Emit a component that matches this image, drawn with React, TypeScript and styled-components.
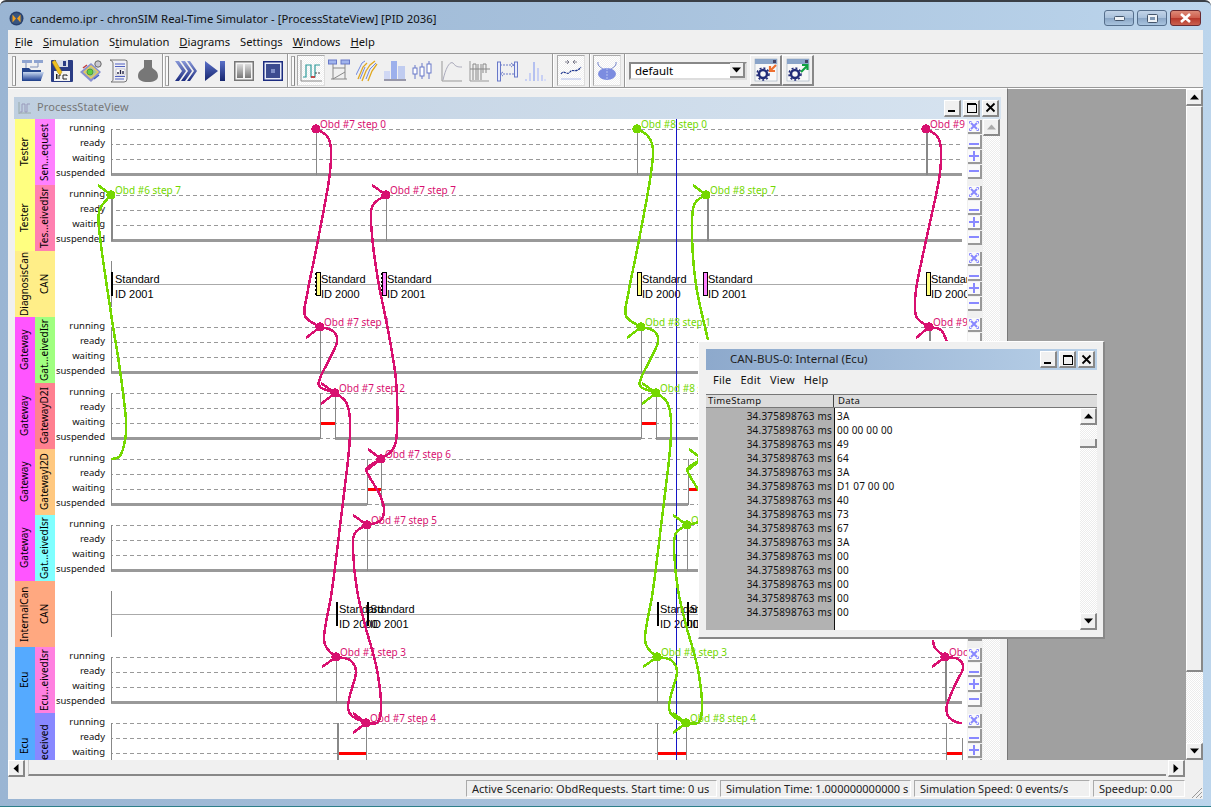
import React from 'react';
import styled, { createGlobalStyle } from 'styled-components';

const MAGENTA = '#d81070';
const GREEN = '#74d800';
const ui = `"Noto Sans", "Open Sans", sans-serif`;

const Global = createGlobalStyle`
  html, body { margin: 0; padding: 0; background: #fff; overflow: hidden; }
  #root { width: 1211px; height: 807px; }
`;

const Win = styled.div`
  position: relative; width: 1211px; height: 807px; box-sizing: border-box; overflow: hidden;
  display: flex; flex-direction: column;
  background: linear-gradient(90deg, #9ab5d3 0%, #a7c1dc 50%, #bcd5ec 100%);
  border-top: 2px solid #3a3f46; border-bottom: 1px solid #2e7f8a; border-radius: 6px 6px 0 0;
`;
const TitleBar = styled.div`
  height: 28px; flex: none; box-sizing: border-box; display: flex; align-items: center; padding: 4px 10px 0 9px;
  font: 11.3px ${ui}; color: #111;
`;
const TitleText = styled.span` margin-left: 6px; flex: 1; letter-spacing: 0.03px; `;
const Caption = styled.div<{ $red?: boolean; $w: number }>`
  width: ${p => p.$w}px; height: 16px; margin-left: 3px; border-radius: 3px; box-sizing: border-box;
  border: 1px solid ${p => (p.$red ? '#6a2a30' : '#566f8c')};
  background: ${p => p.$red ? 'linear-gradient(#dd8a78 0%, #cf5f4e 48%, #b7382b 52%, #c9604f 100%)' : 'linear-gradient(#c2d4e8 0%, #a9c1db 48%, #8aa6c6 52%, #a9c4de 100%)'};
  display: flex; align-items: center; justify-content: center;
`;
const Client = styled.div`
  flex: 1; min-height: 0; margin: 0 8px 7px 8px; background: #f0f0f0; display: flex; flex-direction: column;
`;
const MenuBar = styled.div`
  height: 24px; flex: none; display: flex; align-items: center; gap: 10px; padding-left: 7px; box-sizing: border-box;
  font: 11.2px ${ui}; color: #111; border-bottom: 1px solid #999;
`;
const MenuItem = styled.span` u { text-underline-offset: 1px; } `;
const ToolBar = styled.div`
  height: 34px; flex: none; display: flex; align-items: center; box-sizing: border-box;
  padding-left: 4px; border-bottom: 1px solid #999;
`;
const Grip = styled.div`
  width: 2px; height: 28px; border: 1px solid #aaa; border-right-color: #888; background: #fafafa; margin: 0 2px 0 0; flex: none;
`;
const Divider = styled.div<{ $l?: number; $r?: number }>`
  width: 1px; height: 33px; background: #999; border-right: 1px solid #fff; flex: none;
  margin: 0 ${p => p.$r ?? 1}px 0 ${p => p.$l ?? 0}px;
`;
const Slot = styled.div<{ $w: number; $on?: boolean }>`
  width: ${p => p.$w}px; height: 31px; flex: none; display: flex; align-items: center; justify-content: center; box-sizing: border-box;
  ${p => p.$on ? `border: 1px solid #ddd; border-top-color:#aaa; border-left-color:#aaa; background: repeating-conic-gradient(#f0f0f0 0 25%, #fff 0 50%) 0 0/2px 2px;` : ''}
`;
const Combo = styled.div`
  width: 118px; height: 18px; margin-left: 2px; flex: none; box-sizing: border-box; background: #fff;
  border: 2px solid #888; border-right-color: #ddd; border-bottom-color: #ddd; display: flex; align-items: center;
  font: 11.5px ${ui}; color: #000; padding-left: 4px; justify-content: space-between;
`;
const ComboArrow = styled.div`
  width: 15px; height: 15px; background: #f0f0f0; border-right: 2px solid #888; border-bottom: 2px solid #888; box-sizing: border-box;
  display: flex; align-items: center; justify-content: center;
`;
const BigBtn = styled.div<{ $first?: boolean }>`
  width: 32px; height: 31px; flex: none; box-sizing: border-box; background: #f0f0f0; margin-left: ${p => (p.$first ? 3 : 0)}px;
  border: 1px solid #fff; border-right: 2px solid #888; border-bottom: 2px solid #888;
  display: flex; align-items: center; justify-content: center;
`;
const MdiRow = styled.div` flex: 1; min-height: 0; display: flex; `;
const Inner = styled.div`
  width: 1000px; flex: none; display: flex; flex-direction: column; box-sizing: border-box; border-right: 1px solid #777;
  border-top: 1px solid #fff; padding: 8px 0 0 6px; overflow: hidden;
`;
const InnerTitle = styled.div`
  height: 22px; width: 987px; flex: none; box-sizing: border-box; display: flex; align-items: center; padding-left: 4px;
  background: linear-gradient(90deg, #bfcfe0, #d6e3f0); font: 11px ${ui}; color: #777;
`;
const InnerTitleText = styled.span` margin: 0 0 3px 5px; flex: 1; letter-spacing: 0.1px; `;
const WinBtn = styled.div`
  width: 17px; height: 17px; margin-right: 2px; flex: none; box-sizing: border-box; background: #f0f0f0;
  border: 1px solid #fff; border-right: 2px solid #888; border-bottom: 2px solid #888;
  display: flex; align-items: center; justify-content: center;
`;
const Body = styled.div` position: relative; flex: 1; min-height: 0; display: flex; overflow: hidden; margin-left: 1px; `;
const Tracks = styled.div` width: 968px; flex: none; `;
const Row = styled.div` height: 66px; display: flex; background: #fff; `;
const VLabel = styled.div<{ $bg: string }>`
  width: 20px; height: 66px; flex: none; box-sizing: border-box; padding-left: 2px; background: ${p => p.$bg}; writing-mode: vertical-rl; transform: rotate(180deg);
  display: flex; align-items: center; justify-content: center; font: 10px/20px ${ui}; color: #000; white-space: nowrap;
`;
const States = styled.div`
  width: 56px; flex: none; box-sizing: border-box; padding: 1px 6px 0 0; text-align: right;
  font: 9.5px/15px ${ui}; color: #111;
`;
const Ctrl = styled.div` width: 16px; flex: none; padding-top: 1px; display: flex; flex-direction: column; background: #f0f0f0; `;
const CtrlBtn = styled.div`
  width: 14px; height: 14px; margin: 0 1px 1px 1px; box-sizing: border-box; background: #fafafa;
  border-right: 2px solid #999; border-bottom: 2px solid #999; display: flex; align-items: center; justify-content: center;
`;
const Dither = styled.div<{ $w: number }>`
  width: ${p => p.$w}px; flex: none; display: flex; flex-direction: column; justify-content: space-between;
  background: repeating-conic-gradient(#ececec 0 25%, #fff 0 50%) 0 0/2px 2px;
`;
const ScrollBtn = styled.div<{ $dim?: boolean }>`
  width: 17px; height: 17px; flex: none; box-sizing: border-box; background: #f0f0f0; border: 1px solid #fff;
  border-right: 2px solid #888; border-bottom: 2px solid #888; color: ${p => (p.$dim ? '#aaa' : '#000')};
  display: flex; align-items: center; justify-content: center;
`;
const Overlay = styled.svg` position: absolute; left: 0; top: 0; pointer-events: none; overflow: hidden; `;
const Gray = styled.div` flex: 1; background: #a0a0a0; border-top: 1px solid #fff; `;
const VScroll = styled(Dither)` height: 100%; box-sizing: border-box; border-top: 1px solid #fff; `;
const VThumb = styled.div`
  height: 566px; flex: none; box-sizing: border-box; background: #f0f0f0; border: 1px solid #fff; border-right: 2px solid #888; border-bottom: 2px solid #888;
`;
const VSpacer = styled.div` flex: 1; `;
const HScroll = styled.div` height: 16px; flex: none; display: flex; background: #f0f0f0; `;
const HThumb = styled.div` flex: 1; margin: 0 2px 0 3px; border-bottom: 2px solid #888; border-left: 1px solid #ccc; `;
const HCorner = styled.div` width: 18px; flex: none; `;
const Status = styled.div`
  height: 23px; flex: none; box-sizing: border-box; display: flex; justify-content: flex-end; align-items: flex-start; padding: 4px 18px 0 0; gap: 3px;
  font: 11px ${ui}; color: #222; position: relative;
`;
const Cell = styled.div<{ $w: number }>`
  width: ${p => p.$w}px; height: 17px; box-sizing: border-box; border: 1px solid #aaa; border-right-color: #fff; border-bottom-color: #fff;
  padding-left: 5px; line-height: 15px; white-space: nowrap; overflow: hidden;
`;
const Corner = styled.svg` position: absolute; right: 0; bottom: 0; `;
const Float = styled.div`
  position: absolute; left: 698px; top: 339px; width: 407px; height: 298px; box-sizing: border-box; background: #f0f0f0;
  border: 1px solid #fff; border-right: 2px solid #888; border-bottom: 2px solid #888; padding: 7px 6px 0 7px; display: flex; flex-direction: column;
`;
const FloatTitle = styled.div`
  height: 21px; flex: none; display: flex; align-items: center; padding-left: 24px; font: 11.5px ${ui}; color: #222;
  background: linear-gradient(90deg, #8da9cc, #b8d0e8);
`;
const FloatTitleText = styled.span` flex: 1; margin-bottom: 3px; `;
const FloatMenu = styled.div` height: 24px; flex: none; display: flex; align-items: center; gap: 9px; padding: 0 0 5px 7px; box-sizing: border-box; font: 11px ${ui}; color: #111; letter-spacing: 0.2px; `;
const Head = styled.div`
  height: 12px; flex: none; display: flex; background: #dcdcdc; border-top: 1px solid #777; border-bottom: 1px solid #777; font: 9.5px/11px ${ui}; letter-spacing: 0.3px; color: #111;
`;
const HeadA = styled.div` width: 128px; padding-left: 2px; box-sizing: border-box; border-right: 1px solid #444; `;
const HeadB = styled.div` padding-left: 4px; `;
const TableWrap = styled.div` flex: 1; min-height: 0; display: flex; `;
const TimeCol = styled.div`
  width: 129px; flex: none; background: #b2b2b2; border-right: 1px solid #111; box-sizing: border-box; text-align: right; padding: 1px 2px 0 0;
  font: 10px/14px ${ui}; letter-spacing: 0.2px; color: #111; margin-bottom: 7px;
`;
const DataCol = styled.div` flex: 1; background: #fff; padding: 1px 0 0 2px; font: 10px/14px ${ui}; letter-spacing: 0.2px; color: #111; margin-bottom: 7px; `;
const MiniThumb = styled.div` height: 9px; margin-top: 14px; box-sizing: border-box; background: #f0f0f0; border-right: 2px solid #888; border-bottom: 2px solid #888; `;
const TableScroll = styled(Dither)` margin-bottom: 7px; `;

const Up = ({ c = '#000' }: { c?: string }) => <svg width="9" height="6"><path d="M0 5.5 L4.5 0.5 L9 5.5Z" fill={c} /></svg>;
const Down = () => <svg width="9" height="6"><path d="M0 .5 L4.5 5.5 L9 .5Z" fill="#000" /></svg>;

const Glyph = ({ k }: { k: string }) => (
  <svg width="13" height="13" viewBox="0 0 13 13" shapeRendering="crispEdges">
    {k === 'min' && <rect x="2" y="9" width="7" height="2" fill="#000" />}
    {k === 'max' && <path d="M2 2.5H11M2 3.5H11V11H2Z" fill="none" stroke="#000" />}
    {k === 'x' && <path d="M2.5 2.5L10.5 10.5M10.5 2.5L2.5 10.5" stroke="#000" strokeWidth="1.8" shapeRendering="auto" />}
  </svg>
);

const CtrlIcon = ({ k }: { k: string }) => (
  <svg width="10" height="10" viewBox="0 0 10 10" shapeRendering="crispEdges">
    {k === 'x' && <g fill="none" stroke="#8888ff" shapeRendering="auto"><path d="M2 2L8 8M8 2L2 8" strokeWidth="2" /><path d="M.5 2.5V.5H2.5M7.5 .5H9.5V2.5M.5 7.5V9.5H2.5M7.5 9.5H9.5V7.5" strokeWidth="1" /></g>}
    {k === 'u' && <rect x="0" y="7" width="10" height="2" fill="#8888ff" />}
    {k === 'p' && <path d="M0 4h4V0h2v4h4v2H6v4H4V6H0z" fill="#8888ff" />}
    {k === 'm' && <rect x="0" y="4" width="10" height="2" fill="#8888ff" />}
  </svg>
);

const Ic = ({ w = 24, h = 24, children }: { w?: number; h?: number; children: React.ReactNode }) => (
  <svg width={w} height={h} viewBox={`0 0 ${w} ${h}`}>{children}</svg>
);

const ToolIcons: Record<string, React.ReactNode> = {
  folder: <Ic><defs><linearGradient id="fb" x1="0" y1="0" x2="0" y2="1"><stop offset="0" stopColor="#c8d8f0" /><stop offset="1" stopColor="#2c4c9c" /></linearGradient></defs>
    <rect x="1" y="1" width="10" height="3" fill="#8fa4d0" /><rect x="13" y="1" width="9" height="3" fill="#8fa4d0" />
    <path d="M5 4V9M17 4V8H9" stroke="#7f8fb8" fill="none" />
    <path d="M1 9H8L10 11H20V22H1Z" fill="#24448c" /><path d="M2 13H23L20 21H2Z" fill="url(#fb)" /></Ic>,
  floppy: <Ic><rect x="1" y="1" width="22" height="22" rx="1" fill="#2a3c84" /><rect x="6" y="1" width="12" height="7" fill="#d8dce8" /><rect x="13" y="2" width="3" height="5" fill="#2a3c84" /><rect x="4" y="12" width="16" height="10" fill="#f4f4f4" />
    <rect x="6" y="15" width="1.5" height="5" fill="#222" /><path d="M9 20V16H11M13 16H17V17M13 16V20H17" stroke="#222" fill="none" />
    <path d="M2 3L5 1L12 13L10 16L8 14Z" fill="#f0c020" stroke="#a08010" strokeWidth=".5" /></Ic>,
  gear: <Ic><path d="M1 13L12 4L22 13L12 23Z" fill="#8890d0" /><path d="M4 13L12 6L20 13L12 20Z" fill="#e8c860" /><path d="M6 13L12 8L18 13L12 18Z" fill="#a0c8a0" /><circle cx="11" cy="13" r="3" fill="#60d040" stroke="#407030" strokeWidth=".6" />
    <circle cx="19" cy="5" r="3.2" fill="#c8c8d0" stroke="#666" /><path d="M4 9L8 6" stroke="#c04040" strokeWidth="1.5" /><path d="M15 20L20 16" stroke="#4060c0" strokeWidth="1.5" /></Ic>,
  scroll: <Ic w={20}><path d="M1 1H16Q19 1 18 4V20Q18 23 15 23H2Q5 22 4 19V4Q4 2 1 1Z" fill="#f0f0f4" stroke="#777" /><path d="M6 5H16M6 7.5H16M6 17.5H16M6 20H15" stroke="#5060c0" /><rect x="7" y="10" width="9" height="6" fill="#fff" stroke="#99a" strokeWidth=".5" /><path d="M9 15v-2M11.5 15v-4M14 15v-3" stroke="#224" strokeWidth="1.4" /></Ic>,
  pot: <Ic><path d="M8 1H16V8C16 10 22 11 22 17C22 21 18 23 12 23C6 23 2 21 2 17C2 11 8 10 8 8Z" fill="#777" /></Ic>,
  ff: <Ic w={22}><defs><linearGradient id="ffg" x1="0" y1="0" x2="0" y2="1"><stop offset="0" stopColor="#8898d8" /><stop offset="1" stopColor="#1c2c80" /></linearGradient></defs><path d="M0 2L7 12L0 22H4L11 12L4 2ZM6 2L13 12L6 22H10L17 12L10 2ZM12 2L19 12L12 22H15L22 12L15 2Z" fill="url(#ffg)" /></Ic>,
  step: <Ic w={20}><defs><linearGradient id="sg" x1="0" y1="0" x2="0" y2="1"><stop offset="0" stopColor="#5a70c8" /><stop offset="1" stopColor="#16266e" /></linearGradient></defs><path d="M0 2L13 12L0 22Z" fill="url(#sg)" /><rect x="15" y="2" width="5" height="20" fill="url(#sg)" /></Ic>,
  pause: <Ic w={20}><rect x=".75" y="2.75" width="18.5" height="18.5" fill="#f4f4f4" stroke="#777" strokeWidth="1.5" /><defs><linearGradient id="pg" x1="0" y1="0" x2="0" y2="1"><stop offset="0" stopColor="#ddd" /><stop offset="1" stopColor="#777" /></linearGradient></defs><rect x="3" y="5" width="6" height="14" fill="url(#pg)" /><rect x="11" y="5" width="6" height="14" fill="url(#pg)" /></Ic>,
  stop: <Ic w={20}><rect x=".75" y="2.75" width="18.5" height="18.5" fill="#e8ecf8" stroke="#1c2c80" strokeWidth="1.5" /><rect x="3" y="5" width="14" height="14" fill="#3c4c90" /><rect x="8" y="10" width="4" height="4" fill="#8090c8" /></Ic>,
  c1: <Ic w={22}><path d="M1 1V22H22" fill="none" stroke="#888" /><path d="M3 18H6V6H11V18H15V6H20" fill="none" stroke="#2c9a9a" strokeWidth="1.2" /><path d="M11 18H15" stroke="#d02020" strokeWidth="1.5" /><path d="M15 14H21" stroke="#444" strokeDasharray="2 1" /></Ic>,
  c2: <Ic w={22}><rect x="0.5" y="1" width="8" height="4" fill="#a0b4ec" stroke="#6878c8" /><rect x="13" y="1" width="8.5" height="4" fill="#a0b4ec" stroke="#6878c8" /><path d="M5 5V20M17 5V20M5 9H17M5 20L17 13M3 20H19" stroke="#888" fill="none" /></Ic>,
  c3: <Ic w={22}><path d="M2 20L7 8L11 4M6 22L10 12L14 6L19 2M12 22L16 12L21 5" fill="none" stroke="#e0a820" strokeWidth="1.3" /><path d="M0 16L6 4L9 2M4 20L9 8M10 20L14 10L20 4" fill="none" stroke="#7088e0" strokeWidth="1" /></Ic>,
  c4: <Ic w={22}><rect x="0" y="12" width="6" height="8" fill="#d0d8f4" /><rect x="7" y="2" width="6" height="18" fill="#9cb0ec" /><rect x="14" y="7" width="7" height="13" fill="#c0ccf0" /><rect x="0" y="20" width="22" height="2" fill="#99a" /></Ic>,
  c5: <Ic w={22}><g fill="none" stroke="#6878c8"><path d="M3 6V20M10 4V20M17 2V20" /><rect x="1" y="9" width="4" height="6" fill="#fff" /><rect x="8" y="8" width="4" height="9" fill="#fff" /><rect x="15" y="5" width="4" height="9" fill="#fff" /></g></Ic>,
  c6: <Ic w={21}><path d="M1 2V22H21" stroke="#999" fill="none" /><path d="M2 21C5 8 9 2 12 4C15 8 17 8 21 8" stroke="#aab" fill="none" /></Ic>,
  c7: <Ic w={21}><path d="M1 2V22H20" stroke="#999" fill="none" /><path d="M4 21V5H7V21M9 5V21M12 5V21M14 5V14M14 5H17V14M1 10H21" stroke="#888" fill="none" /></Ic>,
  c8: <Ic w={21}><rect x=".5" y="3" width="3" height="19" fill="#e8ecfc" stroke="#6878c8" /><rect x="17.5" y="3" width="3" height="15" fill="#e8ecfc" stroke="#6878c8" /><path d="M3 6H17M14 4L17 6L14 8M3 15H17M6 13L3 15L6 17" stroke="#6878c8" fill="none" strokeDasharray="2 1" /></Ic>,
  c9: <Ic w={22}><rect x="1" y="20" width="2" height="2" fill="#c8d0f4" /><rect x="5" y="14" width="2" height="8" fill="#c8d0f4" /><rect x="9" y="3" width="2" height="19" fill="#b4c0f0" /><rect x="13" y="9" width="2" height="13" fill="#c8d0f4" /><rect x="17" y="16" width="2" height="6" fill="#c8d0f4" /><rect x="20" y="20" width="2" height="2" fill="#d8def8" /></Ic>,
  trace: <Ic w={22}><path d="M5 3H9M7 1L9 3L7 5M17 3H13M15 1L13 3L15 5" stroke="#667" fill="none" strokeWidth=".8" /><path d="M1 15C4 10 7 17 10 13C13 9 16 15 21 8" stroke="#223a90" fill="none" strokeWidth="1.2" strokeDasharray="2.5 .7" /><path d="M1 20H21" stroke="#b0bce8" /></Ic>,
  eye: <Ic w={24}><path d="M3 3C2 8 8 9 9 11M21 3C22 8 16 9 15 11" fill="none" stroke="#7080c8" /><ellipse cx="12" cy="15" rx="9" ry="6" fill="#7c8ce0" /><path d="M12 9V21" stroke="#b8c4f0" strokeDasharray="2 1" /></Ic>,
  in: <Ic><rect x="1" y="1" width="22" height="22" fill="#f8f8f8" stroke="#9ab" strokeWidth=".6" /><rect x="1" y="1" width="22" height="5" fill="#8aa4c8" /><rect x="19" y="2" width="3" height="3" fill="#446" /><circle cx="9" cy="16" r="4" fill="none" stroke="#222c78" strokeWidth="2.5" /><circle cx="9" cy="16" r="6" fill="none" stroke="#222c78" strokeWidth="1.6" strokeDasharray="2 2" /><path d="M22 7L16 13M16 8V13H21" stroke="#ee7030" strokeWidth="2.2" fill="none" /></Ic>,
  out: <Ic><rect x="1" y="1" width="22" height="22" fill="#f8f8f8" stroke="#9ab" strokeWidth=".6" /><rect x="1" y="1" width="22" height="5" fill="#8aa4c8" /><rect x="19" y="2" width="3" height="3" fill="#446" /><circle cx="9" cy="16" r="4" fill="none" stroke="#222c78" strokeWidth="2.5" /><circle cx="9" cy="16" r="6" fill="none" stroke="#222c78" strokeWidth="1.6" strokeDasharray="2 2" /><path d="M15 14L21 8M16 7H21.5V12" stroke="#10a040" strokeWidth="2.2" fill="none" /></Ic>,
};

type Msg = [number, number, string, string, boolean?];
type R = {
  g: string; gc: string; t: string; tc: string; can?: boolean; axis?: number;
  verts?: [number, number?, number?][]; bars?: [number, number][]; gaps?: [number, number][]; msgs?: Msg[];
};

const rows: R[] = [
  { g: 'Tester', gc: '#ffff80', t: 'Sen...equest', tc: '#ff80ff', verts: [[316], [637], [926, 2]] },
  { g: 'Tester', gc: '#ffff80', t: 'Tes...eivedIsr', tc: '#ff80b0', axis: 2, verts: [[386], [707, 2]] },
  { g: 'DiagnosisCan', gc: '#ffee88', t: 'CAN', tc: '#ffee88', can: true, msgs: [[111, 2, '#000', '2001'], [316, 4, '#ffff80', '2000', true], [382, 4, '#ff80ff', '2001', true], [637, 4, '#ffff80', '2000'], [703, 4, '#ff80ff', '2001'], [926, 4, '#ffff80', '2000']] },
  { g: 'Gateway', gc: '#ff55ff', t: 'Gat...eivedIsr', tc: '#a0ff80', verts: [[320], [641], [929, 2]] },
  { g: 'Gateway', gc: '#ff55ff', t: 'GatewayD2I', tc: '#ff8090', verts: [[320], [335], [641], [656]], bars: [[320, 335], [641, 656]], gaps: [[320, 335], [641, 656]] },
  { g: 'Gateway', gc: '#ff55ff', t: 'GatewayI2D', tc: '#ffc880', verts: [[367], [381], [688], [702]], bars: [[367, 381], [688, 702]], gaps: [[367, 381], [688, 702]] },
  { g: 'Gateway', gc: '#ff55ff', t: 'Gat...eivedIsr', tc: '#80ffff', verts: [[367], [687]] },
  { g: 'InternalCan', gc: '#ffa880', t: 'CAN', tc: '#ffa880', can: true, msgs: [[336, 2, '#000', '2000'], [367, 2, '#000', '2001'], [657, 2, '#000', '2000'], [687, 2, '#000', '2001']] },
  { g: 'Ecu', gc: '#55aaff', t: 'Ecu...eivedIsr', tc: '#ff80e0', verts: [[336], [657], [945, 2]] },
  { g: 'Ecu', gc: '#55aaff', t: '...eceived', tc: '#8888ff', verts: [[337, 2], [366], [657], [686], [946], [962, 1, 25]], bars: [[337, 366], [657, 686], [946, 962]] },
];

const States4 = ['running', 'ready', 'waiting', 'suspended'];

const PlotSvg = styled.svg` flex: none; `;

function Plot({ r }: { r: R }) {
  if (r.can) {
    return (
      <PlotSvg width="856" height="66" viewBox="111 0 856 66" shapeRendering="crispEdges">
        <line x1="111" x2="963" y1="33.5" y2="33.5" stroke="#aaa" />
        <line x1="111.5" x2="111.5" y1="10" y2="56" stroke="#888" />
        {(r.msgs || []).map(([x, w, c, id, dashed], i) => {
          const tx = x + w + (x === 111 ? 2 : 1);
          return (
            <g key={i}>
              {w > 2 ? <rect x={x + .5} y="21.5" width={w} height="23" fill={c} stroke="#000" /> : <rect x={x} y="21" width={w} height="24" fill="#000" />}
              {dashed && <line x1={x - .5} x2={x - .5} y1="22" y2="45" stroke="#000" strokeDasharray="2 2" />}
              <text x={tx} y="32" fontFamily="Liberation Sans" fontSize="11" fill="#000">Standard</text>
              <text x={tx} y="47" fontFamily="Liberation Sans" fontSize="11" fill="#000">ID {id}</text>
            </g>
          );
        })}
      </PlotSvg>
    );
  }
  const gaps = r.gaps || [];
  const segs: [number, number][] = [];
  let s = 111;
  gaps.forEach(([a, b]) => { segs.push([s, a]); s = b; });
  segs.push([s, 962]);
  return (
    <PlotSvg width="856" height="66" viewBox="111 0 856 66" shapeRendering="crispEdges">
      {[10, 25, 40, 55].map(y => <line key={y} x1="109" x2="962" y1={y + .5} y2={y + .5} stroke="#999" strokeDasharray="4 3" />)}
      {segs.map(([a, b]) => <rect key={a} x={a} y="54" width={b - a} height="3" fill="#999" />)}
      <rect x="111" y="10" width={r.axis || 1} height="46" fill="#888" />
      {(r.bars || []).map(([a, b]) => <rect key={a} x={a} y="39" width={b - a} height="3" fill="#ff0000" />)}
      {(r.verts || []).map(([x, w, y0]) => <rect key={x} x={x} y={y0 ?? 10} width={w || 1} height={46 - ((y0 ?? 10) - 10)} fill="#888" />)}
    </PlotSvg>
  );
}

type P = [number, number];
function smooth(pts: P[]) {
  let d = `M${pts[0][0]} ${pts[0][1]}`;
  for (let i = 0; i < pts.length - 1; i++) {
    const p0 = pts[i - 1] || pts[i], p1 = pts[i], p2 = pts[i + 1], p3 = pts[i + 2] || p2;
    const c1 = [p1[0] + (p2[0] - p0[0]) / 6, p1[1] + (p2[1] - p0[1]) / 6];
    const c2 = [p2[0] - (p3[0] - p1[0]) / 6, p2[1] - (p3[1] - p1[1]) / 6];
    d += ` C${c1[0]} ${c1[1]} ${c2[0]} ${c2[1]} ${p2[0]} ${p2[1]}`;
  }
  return d;
}

const curves: { c: string; p: P[] }[] = [
  { c: GREEN, p: [[111, 459], [120, 456], [125, 440], [126, 420], [120, 370], [112, 320], [101, 245], [99, 212], [111, 195]] },
  { c: MAGENTA, p: [[316, 129], [327, 136], [331, 150], [329, 180], [318, 240], [307, 295], [305, 316], [320, 327]] },
  { c: MAGENTA, p: [[320, 327], [333, 331], [337, 342], [328, 362], [320, 378], [320, 387], [335, 393]] },
  { c: MAGENTA, p: [[335, 393], [346, 402], [350, 420], [349, 450], [342, 510], [332, 590], [324, 640], [336, 657]] },
  { c: MAGENTA, p: [[336, 657], [350, 660], [356, 672], [350, 695], [348, 708], [352, 716], [366, 723]] },
  { c: MAGENTA, p: [[366, 723], [378, 722], [381, 702], [376, 665], [365, 625], [357, 590], [353, 550], [355, 533], [367, 525]] },
  { c: MAGENTA, p: [[367, 525], [380, 521], [384, 510], [380, 495], [369, 476], [367, 468], [381, 459]] },
  { c: MAGENTA, p: [[381, 459], [393, 449], [397, 430], [396, 380], [388, 330], [378, 280], [372, 235], [372, 207], [386, 195]] },
  { c: GREEN, p: [[637, 129], [648, 136], [653, 150], [650, 180], [639, 240], [628, 295], [626, 316], [641, 327]] },
  { c: GREEN, p: [[641, 327], [654, 331], [658, 342], [649, 362], [641, 378], [641, 387], [656, 393]] },
  { c: GREEN, p: [[656, 393], [667, 402], [671, 420], [670, 450], [663, 510], [653, 590], [645, 640], [657, 657]] },
  { c: GREEN, p: [[657, 657], [671, 660], [677, 672], [671, 695], [669, 708], [673, 716], [686, 723]] },
  { c: GREEN, p: [[686, 723], [699, 722], [702, 702], [697, 665], [686, 625], [678, 590], [674, 550], [676, 533], [687, 525]] },
  { c: GREEN, p: [[687, 525], [700, 521], [705, 510], [701, 495], [690, 476], [688, 468], [702, 459]] },
  { c: GREEN, p: [[706, 195], [694, 205], [692, 235], [696, 285], [708, 340]] },
  { c: MAGENTA, p: [[926, 129], [937, 136], [941, 150], [939, 180], [925, 245], [916, 290], [916, 316], [929, 327]] },
  { c: MAGENTA, p: [[929, 327], [941, 330], [947, 342]] },
  { c: MAGENTA, p: [[945, 657], [958, 659], [963, 668], [955, 685], [947, 705], [948, 716], [956, 722], [962, 723]] },
  { c: MAGENTA, p: [[933, 640], [935, 648], [945, 657]] },
];
const tails: [number, number, number, number, string][] = [
  [98, 185, 111, 195, GREEN], [372, 185, 386, 195, MAGENTA], [693, 185, 706, 195, GREEN],
  [306, 338, 320, 327, MAGENTA], [627, 338, 641, 327, GREEN], [916, 338, 929, 327, MAGENTA],
  [321, 404, 335, 393, MAGENTA], [321, 383, 335, 393, MAGENTA], [642, 404, 656, 393, GREEN], [642, 383, 656, 393, GREEN],
  [368, 449, 381, 459, MAGENTA], [367, 470, 381, 459, MAGENTA], [689, 449, 702, 459, GREEN], [688, 470, 702, 459, GREEN],
  [353, 515, 367, 525, MAGENTA], [673, 515, 687, 525, GREEN],
  [322, 667, 336, 657, MAGENTA], [643, 667, 657, 657, GREEN], [932, 667, 945, 657, MAGENTA],
  [353, 713, 366, 723, MAGENTA], [353, 733, 366, 723, MAGENTA], [673, 713, 686, 723, GREEN], [673, 733, 686, 723, GREEN],
];
const dots: [number, number, string, string][] = [
  [316, 129, MAGENTA, 'Obd #7 step 0'], [637, 129, GREEN, 'Obd #8 step 0'], [926, 129, MAGENTA, 'Obd #9'],
  [111, 195, GREEN, 'Obd #6 step 7'], [386, 195, MAGENTA, 'Obd #7 step 7'], [706, 195, GREEN, 'Obd #8 step 7'],
  [320, 327, MAGENTA, 'Obd #7 step 1'], [641, 327, GREEN, 'Obd #8 step 1'], [929, 327, MAGENTA, 'Obd #9'],
  [335, 393, MAGENTA, 'Obd #7 step 2'], [656, 393, GREEN, 'Obd #8 step 2'],
  [381, 459, MAGENTA, 'Obd #7 step 6'], [702, 459, GREEN, 'Obd #8 step 6'],
  [367, 525, MAGENTA, 'Obd #7 step 5'], [687, 525, GREEN, 'Obd #8 step 5'],
  [336, 657, MAGENTA, 'Obd #7 step 3'], [657, 657, GREEN, 'Obd #8 step 3'], [945, 657, MAGENTA, 'Obd #9 step 3'],
  [366, 723, MAGENTA, 'Obd #7 step 4'], [686, 723, GREEN, 'Obd #8 step 4'],
];

const tableData = ['3A', '00 00 00 00', '49', '64', '3A', 'D1 07 00 00', '40', '73', '67', '3A', '00', '00', '00', '00', '00'];

const Menu = ({ label, u }: { label: string; u?: number }) => (
  <MenuItem>{u === undefined ? label : <>{label.slice(0, u)}<u>{label[u]}</u>{label.slice(u + 1)}</>}</MenuItem>
);

export default function App() {
  return (
    <>
      <Global />
      <Win>
        <TitleBar>
          <svg width="15" height="15" viewBox="0 0 15 15"><circle cx="7.5" cy="7.5" r="7" fill="#27406e" /><circle cx="7.5" cy="7.5" r="5.6" fill="#39557f" /><path d="M3.5 3.5L7 7.5L3.5 11.5ZM11.5 3.5L8 7.5L11.5 11.5Z" fill="#f0a020" /></svg>
          <TitleText>candemo.ipr - chronSIM Real-Time Simulator - [ProcessStateView] [PID 2036]</TitleText>
          <Caption $w={30}><svg width="11" height="5"><rect x=".5" y=".5" width="10" height="4" rx="1" fill="#eef2f6" stroke="#44566c" /></svg></Caption>
          <Caption $w={30}><svg width="11" height="9"><rect x=".5" y=".5" width="10" height="8" rx="1" fill="#eef2f6" stroke="#44566c" /><rect x="3" y="3" width="5" height="3" fill="#7f98b4" /></svg></Caption>
          <Caption $w={31} $red><svg width="13" height="10" viewBox="0 0 13 10"><path d="M2 1L11 9M11 1L2 9" stroke="#fff" strokeWidth="2.6" /></svg></Caption>
        </TitleBar>
        <Client>
          <MenuBar>
            <Menu label="File" u={0} /><Menu label="Simulation" u={0} /><Menu label="Stimulation" u={1} /><Menu label="Diagrams" u={0} /><Menu label="Settings" /><Menu label="Windows" u={0} /><Menu label="Help" u={0} />
          </MenuBar>
          <ToolBar>
            <Grip />
            {['folder', 'floppy', 'gear', 'scroll', 'pot'].map((k, i) => <Slot key={k} $w={i === 3 ? 28 : 29}>{ToolIcons[k]}</Slot>)}
            <Divider />
            <Grip />
            {['ff', 'step', 'pause', 'stop'].map(k => <Slot key={k} $w={29}>{ToolIcons[k]}</Slot>)}
            <Divider $r={2} />
            <Grip />
            <Slot $w={28} $on>{ToolIcons.c1}</Slot>
            {['c2', 'c3', 'c4', 'c5', 'c6', 'c7', 'c8', 'c9'].map(k => <Slot key={k} $w={28}>{ToolIcons[k]}</Slot>)}
            <Divider $l={3} $r={3} />
            <Slot $w={28} $on>{ToolIcons.trace}</Slot>
            <Divider $l={4} $r={2} />
            <Slot $w={28} $on>{ToolIcons.eye}</Slot>
            <Divider $l={3} $r={1} />
            <Combo>default<ComboArrow><Down /></ComboArrow></Combo>
            <BigBtn $first>{ToolIcons.in}</BigBtn>
            <BigBtn>{ToolIcons.out}</BigBtn>
          </ToolBar>
          <MdiRow>
            <Inner>
              <InnerTitle>
                <svg width="14" height="14" viewBox="0 0 14 14"><path d="M1 1V13M1 12H13" stroke="#9aa" fill="none" /><path d="M2 11H4V3H7V11H9V3H12" stroke="#99b" fill="none" /></svg>
                <InnerTitleText>ProcessStateView</InnerTitleText>
                <WinBtn><Glyph k="min" /></WinBtn><WinBtn><Glyph k="max" /></WinBtn><WinBtn><Glyph k="x" /></WinBtn>
              </InnerTitle>
              <Body>
                <Tracks>
                  {rows.map((r, i) => (
                    <Row key={i}>
                      <VLabel $bg={r.gc}>{r.g}</VLabel>
                      <VLabel $bg={r.tc}>{r.t}</VLabel>
                      <States>{!r.can && States4.map(s => <div key={s}>{s}</div>)}</States>
                      <Plot r={r} />
                      <Ctrl>{['x', 'u', 'p', 'm'].map(k => <CtrlBtn key={k}><CtrlIcon k={k} /></CtrlBtn>)}</Ctrl>
                    </Row>
                  ))}
                </Tracks>
                <Dither $w={17}>
                  <ScrollBtn $dim><Up c="#aaa" /></ScrollBtn>
                </Dither>
                <Overlay width="952" height="641" viewBox="15 119 952 641">
                  <g shapeRendering="crispEdges">
                    <line x1="676.5" x2="676.5" y1="119" y2="760" stroke="#1414c8" />
                    {curves.map((c, i) => <path key={i} d={smooth(c.p)} fill="none" stroke={c.c} strokeWidth="2.5" />)}
                    {tails.map(([a, b, x, y, c], i) => <line key={i} x1={a} y1={b} x2={x} y2={y} stroke={c} strokeWidth="2.5" />)}
                    {dots.map(([x, y, c], i) => <circle key={i} cx={x} cy={y} r="4.6" fill={c} />)}
                  </g>
                  {dots.map(([x, y, c, t], i) => (
                    <text key={i} x={x + 4} y={y - 1} fontFamily="Noto Sans" fontSize="10" fill={c}>{t}</text>
                  ))}
                </Overlay>
              </Body>
            </Inner>
            <Gray />
            <VScroll $w={17}>
              <ScrollBtn><Up /></ScrollBtn>
              <VThumb />
              <VSpacer />
              <ScrollBtn><Down /></ScrollBtn>
            </VScroll>
          </MdiRow>
          <HScroll>
            <ScrollBtn><svg width="6" height="9"><path d="M5.5 0L.5 4.5L5.5 9Z" fill="#000" /></svg></ScrollBtn>
            <HThumb />
            <ScrollBtn><svg width="6" height="9"><path d="M.5 0L5.5 4.5L.5 9Z" fill="#000" /></svg></ScrollBtn>
            <HCorner />
          </HScroll>
          <Status>
            <Cell $w={251}>Active Scenario: ObdRequests. Start time: 0 us</Cell>
            <Cell $w={191}>Simulation Time: 1.000000000000 s</Cell>
            <Cell $w={176}>Simulation Speed: 0 events/s</Cell>
            <Cell $w={92}>Speedup: 0.00</Cell>
            <Corner width="16" height="16" viewBox="0 0 16 16"><path d="M15 5L5 15M15 9L9 15M15 13L13 15" stroke="#999" /></Corner>
          </Status>
        </Client>
        <Float>
          <FloatTitle>
            <FloatTitleText>CAN-BUS-0: Internal (Ecu)</FloatTitleText>
            <WinBtn><Glyph k="min" /></WinBtn><WinBtn><Glyph k="max" /></WinBtn><WinBtn><Glyph k="x" /></WinBtn>
          </FloatTitle>
          <FloatMenu><span>File</span><span>Edit</span><span>View</span><span>Help</span></FloatMenu>
          <Head><HeadA>TimeStamp</HeadA><HeadB>Data</HeadB></Head>
          <TableWrap>
            <TimeCol>{tableData.map((_, i) => <div key={i}>34.375898763 ms</div>)}</TimeCol>
            <DataCol>{tableData.map((d, i) => <div key={i}>{d}</div>)}</DataCol>
            <TableScroll $w={17}>
              <ScrollBtn><Up /></ScrollBtn>
              <MiniThumb />
              <VSpacer />
              <ScrollBtn><Down /></ScrollBtn>
            </TableScroll>
          </TableWrap>
        </Float>
      </Win>
    </>
  );
}
